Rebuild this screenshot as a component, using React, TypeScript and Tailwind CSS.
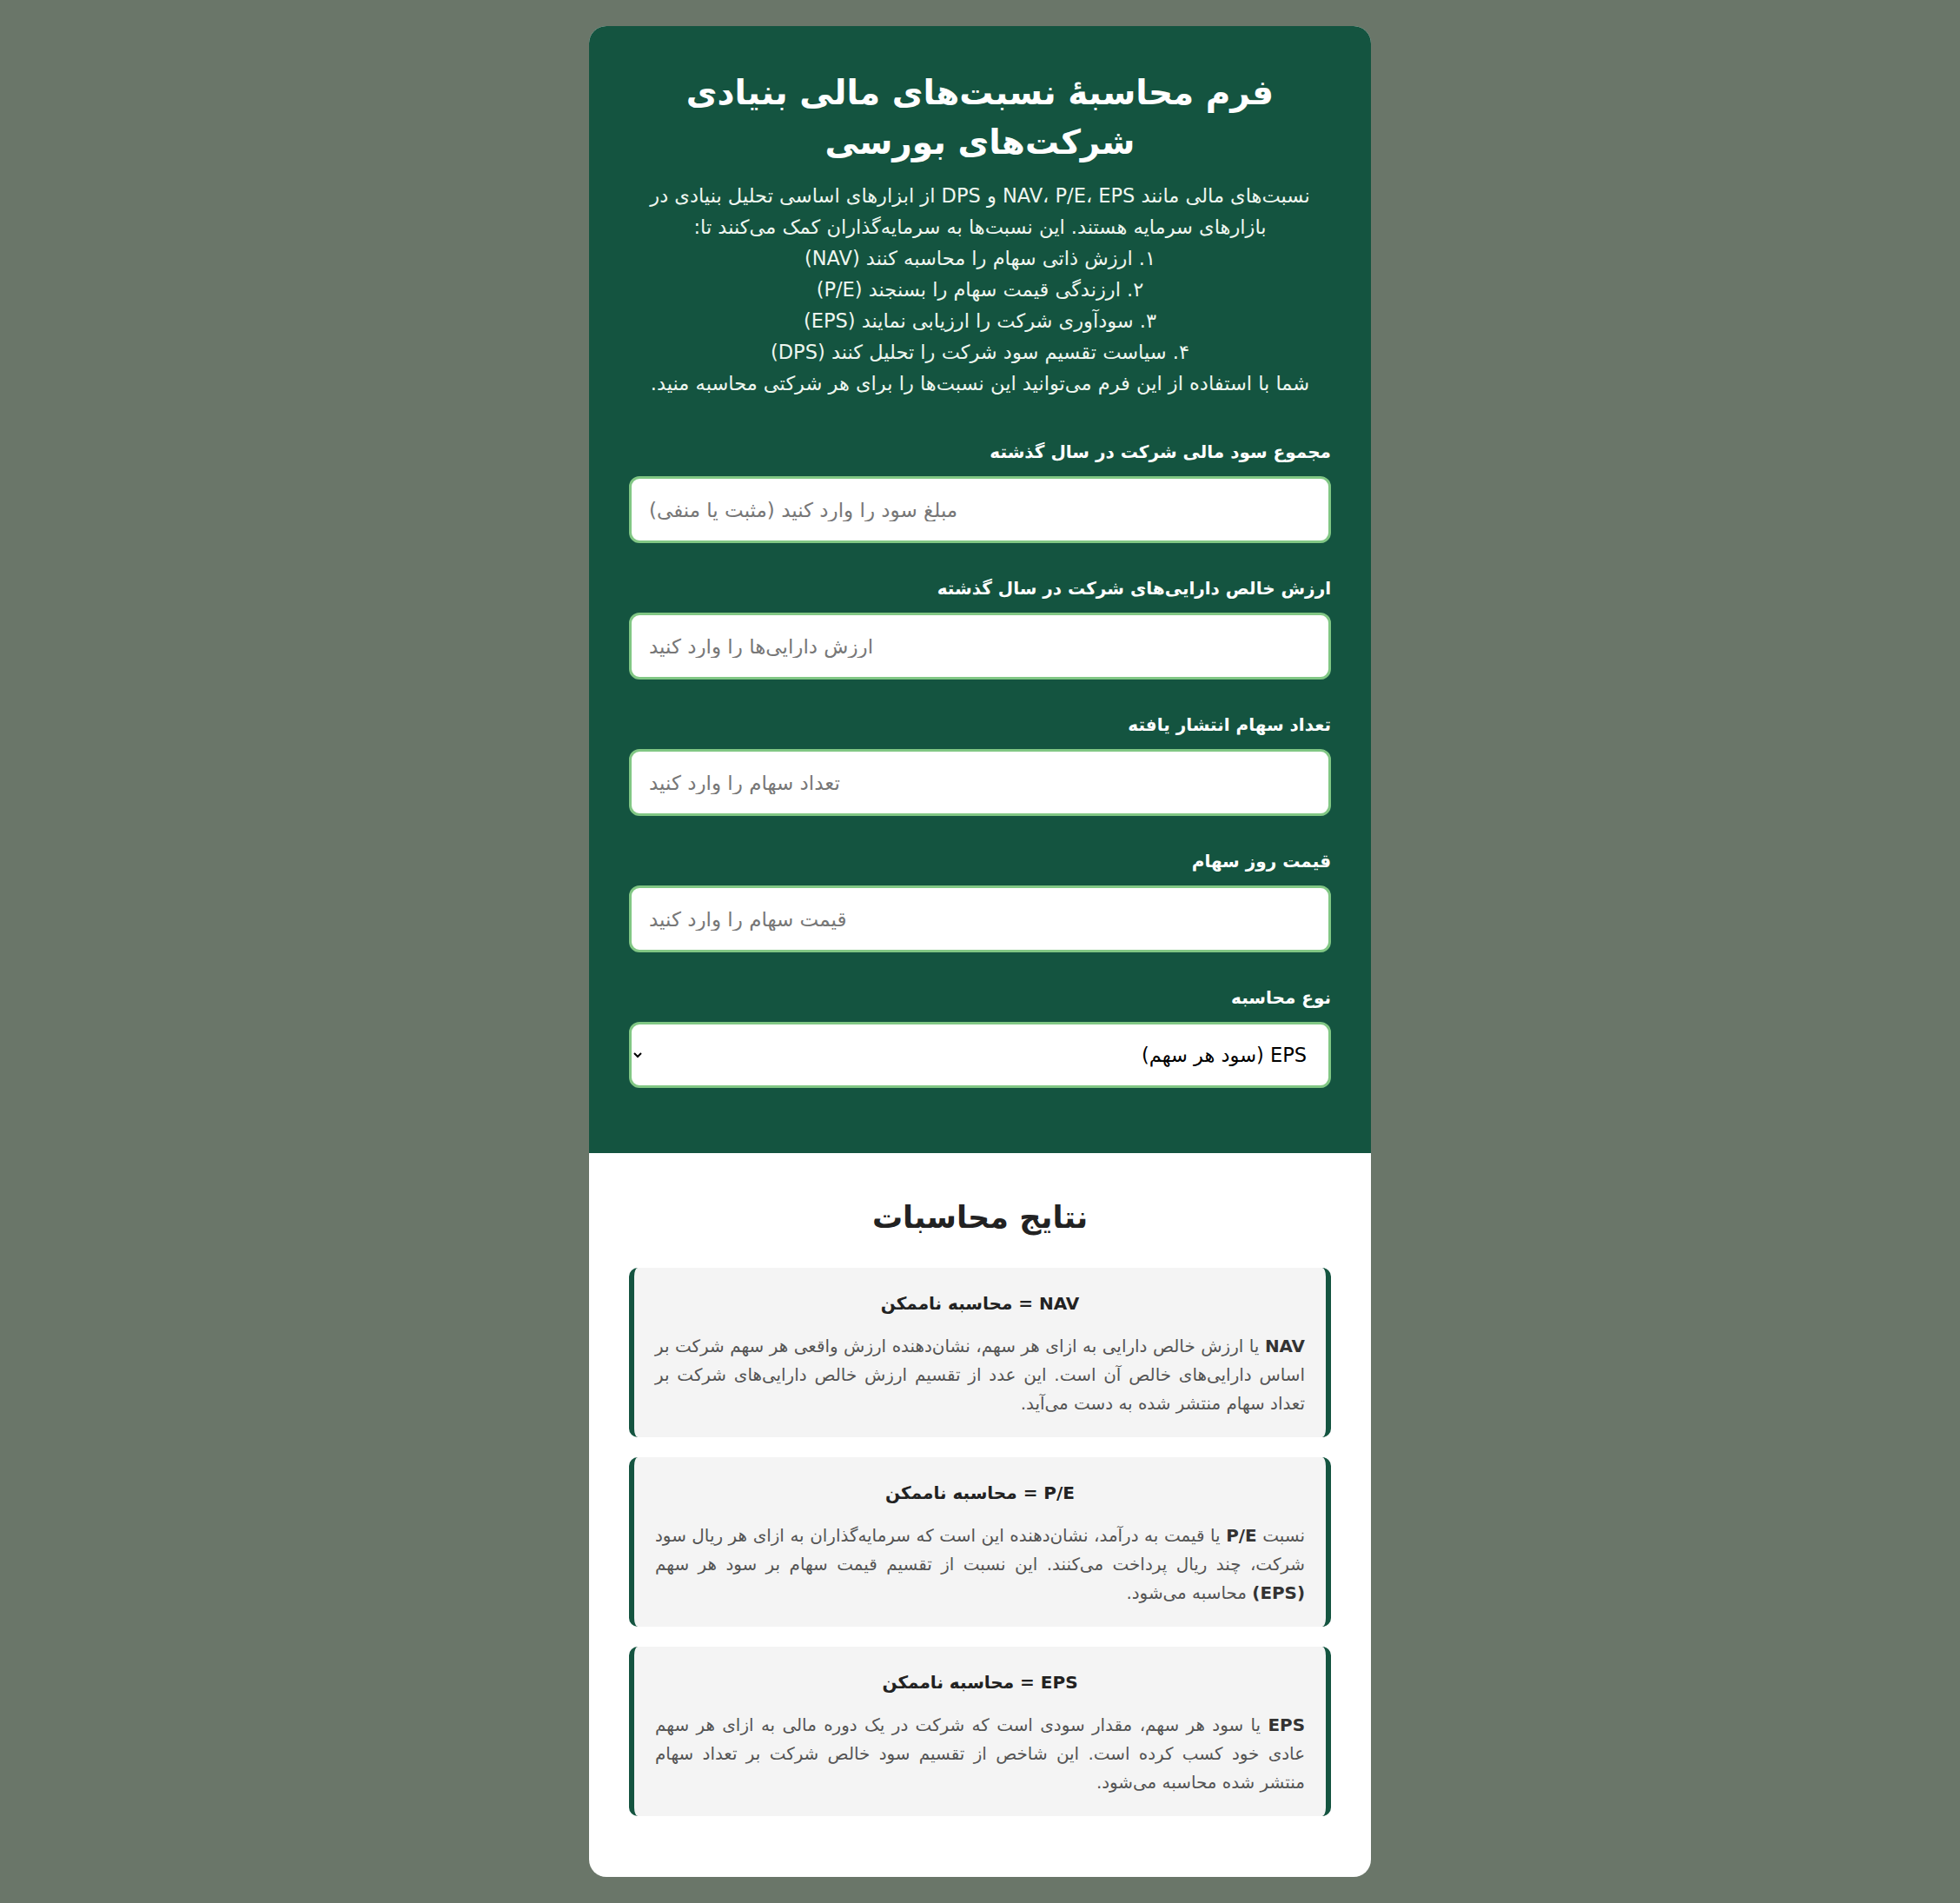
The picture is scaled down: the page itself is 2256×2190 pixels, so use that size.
import { useState } from 'react';

const fields = [
  { label: 'مجموع سود مالی شرکت در سال گذشته', placeholder: 'مبلغ سود را وارد کنید (مثبت یا منفی)' },
  { label: 'ارزش خالص دارایی‌های شرکت در سال گذشته', placeholder: 'ارزش دارایی‌ها را وارد کنید' },
  { label: 'تعداد سهام انتشار یافته', placeholder: 'تعداد سهام را وارد کنید' },
  { label: 'قیمت روز سهام', placeholder: 'قیمت سهام را وارد کنید' },
];

function ResultCard({ title, children }: { title: string; children: React.ReactNode }) {
  return (
    <div className="bg-[#f4f4f4] border-x-[6px] border-[#145440] rounded-[10px] px-6 pt-[25px] pb-[22px]">
      <h3 className="text-center text-[20px] font-bold text-[#222] leading-[32px] mb-[17px]">{title}</h3>
      <p className="text-justify text-[19.9px] leading-[33px] text-[#555]">{children}</p>
    </div>
  );
}

export default function App() {
  const [values, setValues] = useState(['', '', '', '']);
  const [type, setType] = useState('eps');

  return (
    <div className="min-h-screen bg-[#6a7669] flex justify-center py-[30px] font-['DejaVu_Sans',sans-serif]">
      <div dir="rtl" className="w-[900px] bg-white rounded-[20px] overflow-hidden">
        <div className="bg-[#145440] px-[46px] pt-[48px] pb-[75px]">
          <h1 className="text-center text-white font-bold text-[39px] leading-[57px] px-10">
            فرم محاسبهٔ نسبت‌های مالی بنیادی شرکت‌های بورسی
          </h1>
          <div className="mt-[15px] text-center text-[22.5px] leading-[36px] text-[#eef6ef]">
            <p>
              نسبت‌های مالی مانند NAV، P/E، EPS و DPS از ابزارهای اساسی تحلیل بنیادی در بازارهای سرمایه هستند. این نسبت‌ها به سرمایه‌گذاران کمک می‌کنند تا:
            </p>
            <p>۱. ارزش ذاتی سهام را محاسبه کنند (NAV)</p>
            <p>۲. ارزندگی قیمت سهام را بسنجند (P/E)</p>
            <p>۳. سودآوری شرکت را ارزیابی نمایند (EPS)</p>
            <p>۴. سیاست تقسیم سود شرکت را تحلیل کنند (DPS)</p>
            <p>شما با استفاده از این فرم می‌توانید این نسبت‌ها را برای هر شرکتی محاسبه منید.</p>
          </div>

          <div className="mt-[46px] flex flex-col gap-[37px]">
            {fields.map((f, i) => (
              <div key={f.label}>
                <label className="block text-white font-bold text-[20px] leading-[30px] mb-[13px]">{f.label}</label>
                <input
                  type="text"
                  value={values[i]}
                  onChange={(e) => {
                    const next = [...values];
                    next[i] = e.target.value;
                    setValues(next);
                  }}
                  placeholder={f.placeholder}
                  className="w-full h-[77px] bg-white border-[3px] border-[#81c784] rounded-xl px-[20px] text-left text-[23px] text-[#222] placeholder:text-[#777] outline-none"
                />
              </div>
            ))}
            <div>
              <label className="block text-white font-bold text-[20px] leading-[30px] mb-[13px]">نوع محاسبه</label>
              <select
                value={type}
                onChange={(e) => setType(e.target.value)}
                className="w-full h-[76px] bg-white border-[3px] border-[#81c784] rounded-xl pr-[21px] pl-[8px] text-[22.5px] text-black outline-none"
              >
                <option value="eps">EPS (سود هر سهم)</option>
                <option value="nav">NAV (ارزش خالص دارایی هر سهم)</option>
                <option value="pe">P/E (نسبت قیمت به درآمد)</option>
                <option value="dps">DPS (سود تقسیمی هر سهم)</option>
              </select>
            </div>
          </div>
        </div>

        <div className="px-[46px] pt-[50px] pb-[66px]">
          <h2 className="text-center text-[35px] font-bold text-[#222] leading-[48px] mb-[34px]">نتایج محاسبات</h2>
          <div className="flex flex-col gap-[23px]">
            <ResultCard title="NAV = محاسبه ناممکن">
              <strong className="text-[#333]">NAV</strong> یا ارزش خالص دارایی به ازای هر سهم، نشان‌دهنده ارزش واقعی هر سهم شرکت بر اساس دارایی‌های خالص آن است. این عدد از تقسیم ارزش خالص دارایی‌های شرکت بر تعداد سهام منتشر شده به دست می‌آید.
            </ResultCard>
            <ResultCard title="P/E = محاسبه ناممکن">
              نسبت <strong className="text-[#333]">P/E</strong> یا قیمت به درآمد، نشان‌دهنده این است که سرمایه‌گذاران به ازای هر ریال سود شرکت، چند ریال پرداخت می‌کنند. این نسبت از تقسیم قیمت سهام بر سود هر سهم <strong className="text-[#333]">(EPS)</strong> محاسبه می‌شود.
            </ResultCard>
            <ResultCard title="EPS = محاسبه ناممکن">
              <strong className="text-[#333]">EPS</strong> یا سود هر سهم، مقدار سودی است که شرکت در یک دوره مالی به ازای هر سهم عادی خود کسب کرده است. این شاخص از تقسیم سود خالص شرکت بر تعداد سهام منتشر شده محاسبه می‌شود.
            </ResultCard>
          </div>
        </div>
      </div>
    </div>
  );
}
